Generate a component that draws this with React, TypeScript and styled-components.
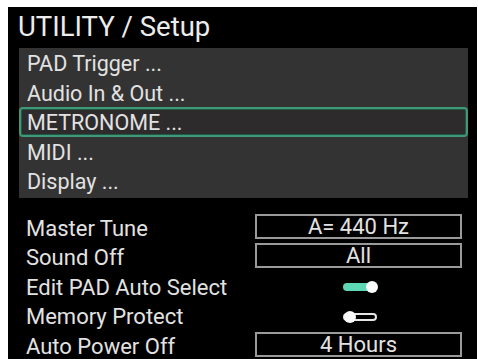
import * as React from 'react'
import styled, { createGlobalStyle } from 'styled-components'

const GlobalStyle = createGlobalStyle`
  html, body {
    margin: 0;
    padding: 0;
    background: #fff;
  }
  body {
    font-family: Roboto, "Liberation Sans", sans-serif;
  }
`

const Screen = styled.div`
  margin: 7px 1px 0 8px;
  width: 469px;
  height: 352px;
  background: #000;
  color: #e2e2e2;
  overflow: hidden;
`

const Title = styled.div`
  height: 41px;
  padding-left: 10px;
  font-size: 27.5px;
  line-height: 39px;
  color: #ececec;
`

const MenuList = styled.div`
  margin: 0 9px 0 11px;
  background: #333;
  padding: 0 0 2px;
`

const MenuRow = styled.div<{ $active?: boolean }>`
  height: 29.5px;
  box-sizing: border-box;
  padding-left: 6px;
  font-size: 21.5px;
  border: 2px solid ${(p) => (p.$active ? '#3f9878' : 'transparent')};
  border-radius: 4px;
  background: ${(p) => (p.$active ? '#2e2b2d' : 'transparent')};
  box-shadow: ${(p) => (p.$active ? 'inset 0 0 0 1px #1f5a45' : 'none')};
  line-height: 27px;
  white-space: nowrap;
`

const Settings = styled.div`
  padding: 16px 0 0 18px;
  display: grid;
  grid-template-columns: 229px 207px;
  grid-auto-rows: 29.5px;
`

const Label = styled.div`
  font-size: 22px;
  line-height: 29px;
  white-space: nowrap;
`

const ValueCell = styled.div`
  display: flex;
  align-items: flex-start;
  justify-content: center;
`

const ValueBox = styled.div`
  width: 100%;
  height: 25px;
  box-sizing: border-box;
  border: 2px solid #9a9a9a;
  text-align: center;
  font-size: 22px;
  line-height: 21px;
`

const ToggleCell = styled.div`
  display: flex;
  align-items: center;
  justify-content: center;
  height: 29px;
  padding-left: 2px;
`

const Track = styled.div<{ $on: boolean }>`
  position: relative;
  width: 34px;
  height: 8px;
  box-sizing: border-box;
  border-radius: 4px;
  background: ${(p) => (p.$on ? '#5ed7b5' : 'transparent')};
  border: ${(p) => (p.$on ? 'none' : '2px solid #e6e6e6')};
`

const Knob = styled.div<{ $on: boolean }>`
  position: absolute;
  top: 50%;
  ${(p) => (p.$on ? 'right: -1px;' : 'left: -1px;')}
  width: 12px;
  height: 12px;
  margin-top: -6px;
  border-radius: 50%;
  background: #fafafa;
`

const Toggle: React.FC<{ on: boolean }> = ({ on }) => (
  <ToggleCell>
    <Track $on={on}>
      <Knob $on={on} />
    </Track>
  </ToggleCell>
)

const menu = ['PAD Trigger ...', 'Audio In & Out ...', 'METRONOME ...', 'MIDI ...', 'Display ...']

export default function App() {
  return (
    <>
      <GlobalStyle />
      <Screen>
        <Title>UTILITY / Setup</Title>
        <MenuList>
          {menu.map((m, i) => (
            <MenuRow key={m} $active={i === 2}>
              {m}
            </MenuRow>
          ))}
        </MenuList>
        <Settings>
          <Label>Master Tune</Label>
          <ValueCell>
            <ValueBox>A= 440 Hz</ValueBox>
          </ValueCell>
          <Label>Sound Off</Label>
          <ValueCell>
            <ValueBox>All</ValueBox>
          </ValueCell>
          <Label>Edit PAD Auto Select</Label>
          <Toggle on />
          <Label>Memory Protect</Label>
          <Toggle on={false} />
          <Label>Auto Power Off</Label>
          <ValueCell>
            <ValueBox>4 Hours</ValueBox>
          </ValueCell>
        </Settings>
      </Screen>
    </>
  )
}
